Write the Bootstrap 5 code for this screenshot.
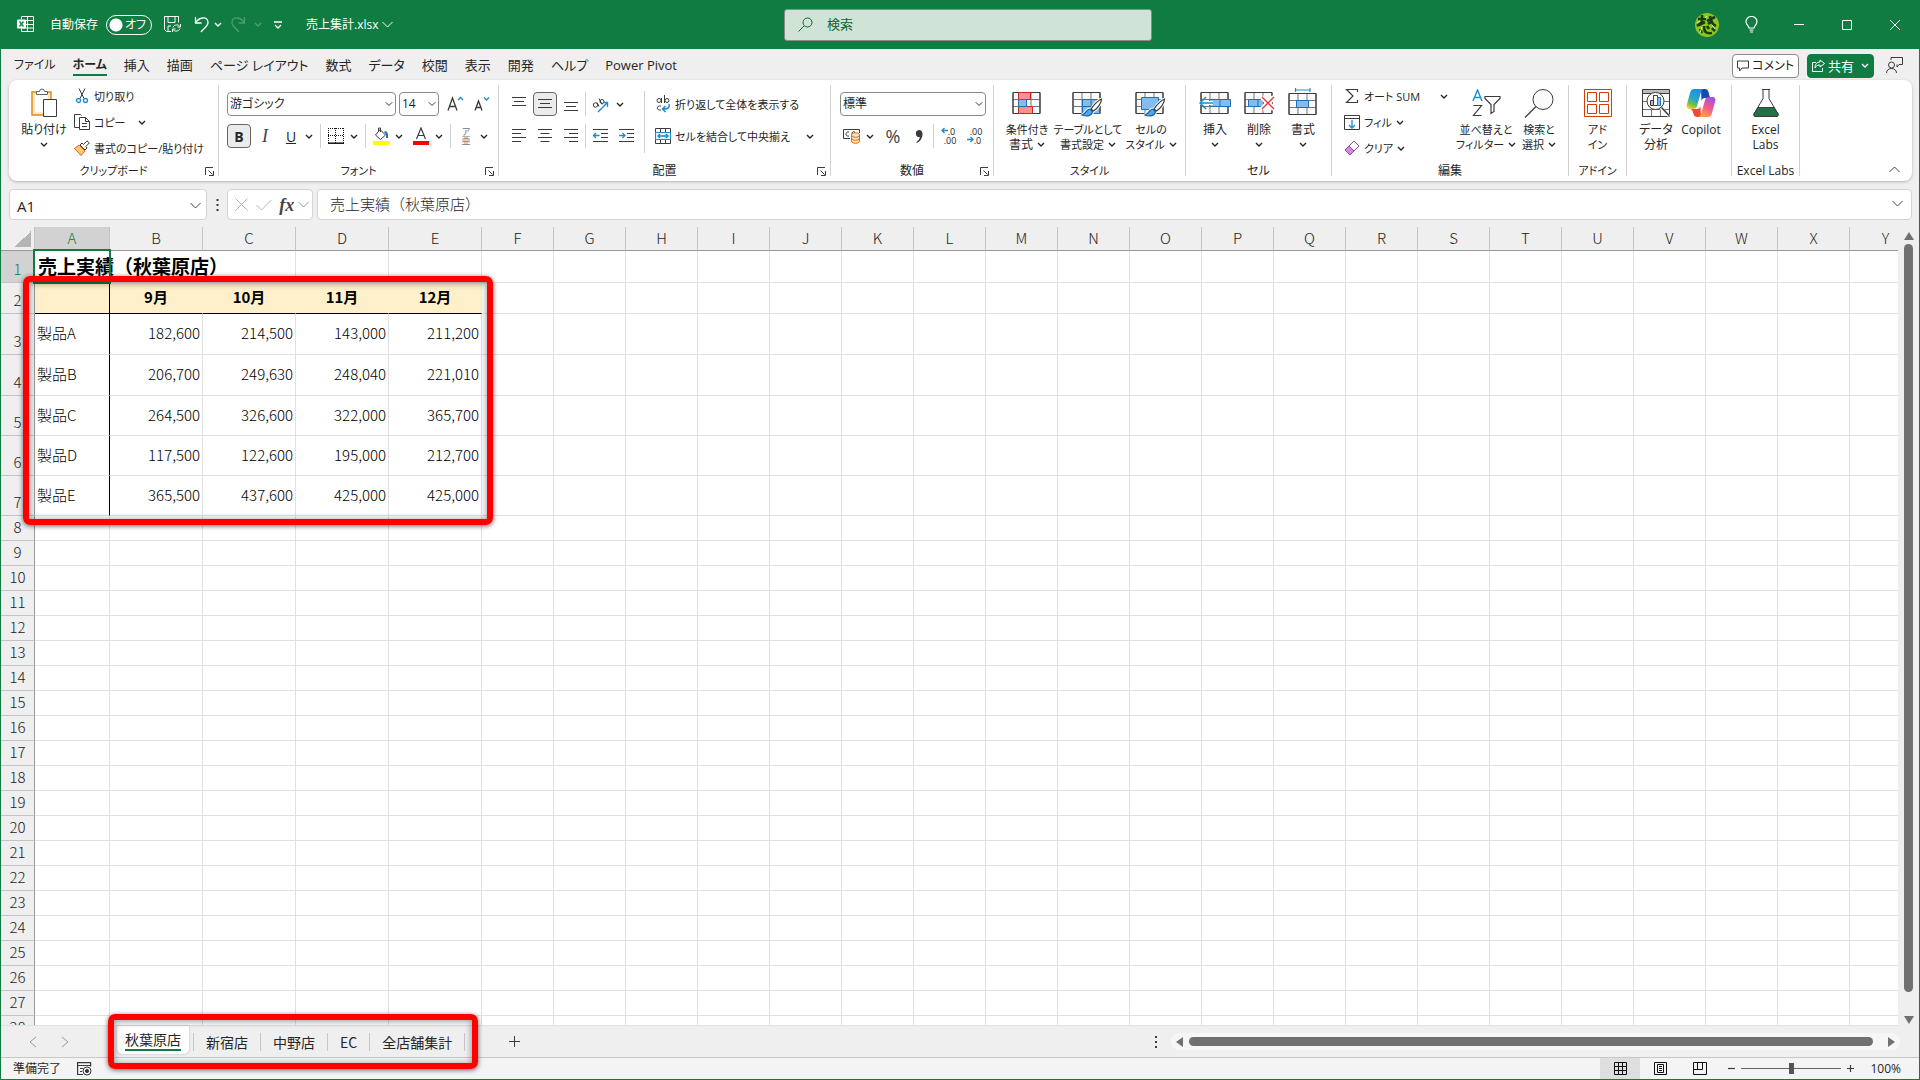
<!DOCTYPE html>
<html lang="ja">
<head>
<meta charset="utf-8">
<meta name="viewport" content="width=device-width, initial-scale=1">
<title>売上集計.xlsx</title>
<link rel="stylesheet" href="https://cdn.jsdelivr.net/npm/bootstrap@5.3.0/dist/css/bootstrap.min.css">
<style>
:root{--xl:#107c41;--ink:#262626;--line:#e1e1e1;--chrome:#efefef}
html,body{height:100%}
body{font:12px/15px "Open Sans","Noto Sans CJK JP",sans-serif;color:var(--ink);background:var(--chrome);overflow:hidden}
.jp{font-family:"Noto Sans CJK JP",sans-serif}
.shell{height:100vh;border:1px solid var(--xl);border-top:0;font-feature-settings:"palt"}
.shell>*{flex-shrink:0}
button,input,select{font:inherit;color:inherit;font-feature-settings:inherit}
.plain{border:0;background:none;padding:0;white-space:nowrap;display:inline-flex;align-items:center;justify-content:center}
.sm11{font-size:11px}
.sm12{font-size:12px}
svg{display:block;flex:none;fill:none;stroke:#3b3b3b;stroke-width:1}
.chev{width:8px;height:5px;stroke:currentColor;stroke-width:1.4}
.chev-lg{width:11px;height:7px;stroke:#444;stroke-width:1}
/* title bar */
.titlebar{height:49px;background:var(--xl);color:#fff;padding:0 0 0 16px}
.titlebar svg{stroke:#fff}
.side{flex:1 1 0}
.autosave{position:relative;width:46px;height:20px}
.autosave input{appearance:none;display:block;width:46px;height:20px;margin:0;border:1px solid #fff;border-radius:10px;background:radial-gradient(circle at 9px 9px,#fff 6px,transparent 7px)}
.autosave span{position:absolute;right:6px;top:2px}
.searchbox{width:368px;height:32px;background:#cfe3d7;border:1px solid #8b8b8b;border-radius:3px;padding:0 13px;gap:14px;color:#0d6434}
.searchbox svg{stroke:#0d6434}
.searchbox input{border:0;background:none;outline:0;width:100%;padding:0;font-size:13px}
.searchbox input::placeholder{color:#0d6434;opacity:1}
.avatar{width:24px;height:24px}
.win{width:48px;height:40px}
/* tab row */
.menurow{height:31px;font-size:13px;line-height:18px;padding:2px 8px 0 13px}
.menurow nav{gap:17px}
.menurow a{color:inherit;text-decoration:none;white-space:nowrap;padding:0 0 2px}
.menurow a.on{font-weight:700;border-bottom:2px solid var(--xl);padding-bottom:0}
.pill{height:24px;border:1px solid #8a8a8a;border-radius:4px;background:#fff;gap:3px}
.pill-share{background:var(--xl);border-color:var(--xl);color:#fff}
.pill-share svg{stroke:#fff}
/* ribbon */
.ribbon{margin:0 7px 0 8px;height:101px;background:#fff;border-radius:8px;box-shadow:0 1px 3px rgba(0,0,0,.25);padding-top:5px}
.rgroup{height:91px;border-right:1px solid #d1d1d1;flex:none}
.rbody{height:82px;margin-top:-2px}
.rfoot{display:grid;grid-template-columns:1fr auto 1fr;height:12px;line-height:12px;align-items:center;padding:0 4px;white-space:nowrap}
.rfoot button{justify-self:end}
.rfoot span{grid-column:2}
.w-clip{width:210px}.w-font{width:280px}.w-align{width:332px}.w-num{width:163px}.w-style{width:192px}
.w-cell{width:146px}.w-edit{width:237px}.w-add{width:58px}.w-data{width:105px}.w-labs{width:68px}
.rows3>*{height:26px;gap:4px}
.rows2{padding-top:5px}
.rows2>div{height:32px}
.tall{flex-direction:column;justify-content:flex-start;padding-top:5px;line-height:15px}
.tall .pic{height:30px;margin-bottom:4px;display:flex;align-items:center}
.tall .ln{height:15px;display:flex;align-items:center;justify-content:center;gap:4px}
.t44{width:44px}.t46{width:46px}.t58{width:58px}.t60{width:60px}.t62{width:62px}.t64{width:64px}
.tool{width:24px;height:24px;border-radius:4px}
.tool.on{border:1px solid #666;background:#ebebeb}
.drop{width:12px;height:24px}
.vsep{width:1px;height:24px;background:#d1d1d1;flex:none}
.spaced .vsep{margin:0 3px 0 5px}
.letter{font-size:14px}
.combo{height:24px;min-height:0;border:1px solid #8a8a8a;border-radius:4px;padding:0 14px 0 2px;font-size:12px;line-height:20px;background-color:#fff;background-position:right 2px center;background-size:8px 8px}
.glyph{font-size:18px;line-height:24px;color:#444}
/* formula bar */
.fbar{padding:8px 7px 7px 8px;height:46px;font-size:15px}
.fbox{height:31px;border:1px solid #d4d4d4;border-radius:4px;background:#fff}
.fbox input{border:0;outline:0;background:none;width:100%;padding:0}
.fbox-name{width:198px;padding:2px 5px 0 7px}
.fbox-fx{width:86px;padding:0 3px}
.fbox-text{padding:0 8px 2px 12px}
/* sheet */
.sheet{overflow:hidden;background:#fff;position:relative;min-height:0}
.shell>.sheet{flex-shrink:1}
.sheetpane{overflow:hidden;border-bottom:1px solid var(--line)}
.cells{border-collapse:separate;border-spacing:0;table-layout:fixed;width:1909px;font-size:15px;line-height:22px;color:#000;font-feature-settings:normal}
.cells th,.cells td{border-right:1px solid var(--line);border-bottom:1px solid var(--line);padding:0 2px 2px;white-space:nowrap;height:25px;font-weight:300}
.cells thead th{background:var(--chrome);height:24px;line-height:21px;text-align:center;border-right-color:#c4c4c4;border-bottom-color:#999;color:#222}
.cells tbody th{background:var(--chrome);text-align:center;vertical-align:bottom;border-right-color:#999;border-bottom-color:#c4c4c4;color:#222}
.cells .sel{background:#d2d2d2!important;color:var(--xl)!important}
.cells td{vertical-align:middle}
.cells .num{text-align:right}
.cells .hd{background:#fff0cc;font-weight:700;text-align:center;border-right-color:#fff0cc;border-bottom-color:#000}
.cells .lab{border-right-color:#000}
.cells .ttl{font-size:19px;font-weight:700;position:relative;padding-left:3px;overflow:visible}
.cells .ttl+td{border-right-color:transparent}
.ttl::after{content:"";position:absolute;inset:-2px -2px -2px -2px;border:2px solid var(--xl)}
.cells .corner{padding-bottom:0}
.corner::after{content:"";display:block;margin:0 1px 0 auto;width:16px;height:16px;background:linear-gradient(135deg,transparent 50%,#b4b4b4 50%)}
.callout{position:absolute;border:6px solid #f00;border-radius:7px;box-shadow:0 1px 5px rgba(0,0,0,.6),inset 0 1px 7px rgba(0,0,0,.45);pointer-events:none;z-index:3}
.callout-data{left:22px;top:49px;width:470px;height:249px}
.callout-tabs{left:-9px;top:-12px;right:-13px;bottom:-12px}
.vscroll{width:21px;background:var(--chrome);padding:5px 0 2px}
.thumb{background:#707070;border-radius:5px}
.vscroll .thumb{width:9px}
.vscroll svg,.hscroll svg{fill:#707070;stroke:none}
/* sheet tabs */
.tabrow{height:32px;border-bottom:1px solid #c8c8c8;font-size:14px;line-height:18px}
.sheettabs{position:relative;height:31px}
.sheettabs button{height:31px;padding:0 12px}
.sheettabs .rule{width:1px;height:18px;background:#c6c6c6;align-self:center}
.sheettabs .on{background:#fff;border-radius:0 0 5px 5px;height:28px;padding:0 8px 1px;margin:0 4px 3px 0;box-shadow:0 0 2px rgba(0,0,0,.3)}
.sheettabs .on span{border-bottom:2px solid var(--xl);line-height:20px}
.hscroll{width:729px;height:17px;background:#f6f6f6;border-radius:8px;padding:0 5px;gap:6px}
.hscroll .thumb{height:9px;margin-right:9px}
/* status bar */
.statusbar{height:21px;background:#f4f4f4;padding:0 18px 0 12px}
.view{width:40px;height:21px}
.view.on{background:#dedede}
.zoomer{appearance:none;width:100px;height:12px;background:linear-gradient(#666,#666) center/100% 1px no-repeat;margin:0 6px}
.zoomer::-webkit-slider-thumb{appearance:none;width:5px;height:11px;background:#555}
</style>
<script src="https://cdn.jsdelivr.net/npm/bootstrap@5.3.0/dist/js/bootstrap.bundle.min.js"></script>
</head>
<body>
<svg width="0" height="0" class="position-absolute">
  <symbol id="cv" viewBox="0 0 8 5"><path d="M1 1l3 3 3-3"/></symbol>
  <symbol id="cvl" viewBox="0 0 11 7"><path d="M.5 1l5 5 5-5"/></symbol>
  <symbol id="launch" viewBox="0 0 9 9"><path d="M.5 8V.5H8M3.500 3.500l4 4M8.500 4v4.500H4"/></symbol>
  <symbol id="gridpic" viewBox="0 0 30 24"><path fill="#fafafa" d="M1 1.500h27v21H1z"/><path stroke="#777" d="M1 8.500h27M1 15.500h27M10 2v20M19 2v20"/><path d="M1 1.500h27v21H1z"/></symbol>
  <symbol id="brush" viewBox="0 0 22 20"><path fill="#fff" stroke="#fff" stroke-width="3" d="M20.500 1c-3 1-8 6-10 10l2 2c4-2.500 8-8 8-12zM9 11c-4 0-3 4-8 6 5 2 10 1 10.500-3.500z"/><path fill="#fff" stroke="#3b3b3b" stroke-width="1.200" d="M20.500 1c-3 1-8 6-10.500 10l2.500 2c4-2.500 8-8 8-12z"/><path fill="#5aa5e0" stroke="#0f5fa8" stroke-width="1.200" d="M9 11c-4 0-3 4-8 6 5 2 10 1 10.500-3.500z"/></symbol>
</svg>
<div class="shell d-flex flex-column">
  <header class="titlebar d-flex align-items-center">
    <div class="side d-flex align-items-center">
      <svg width="17" height="17" viewBox="0 0 17 17"><path d="M4.500 3.500V.5h12v15h-12v-3M10.500.5v15M4.500 4.500h12M9 8.500h7.500M4.500 12h12"/><path fill="#fff" d="M.5 4h8v8h-8z"/><path stroke="#107c41" stroke-width="1.300" d="M2.500 5.500l4 5M6.500 5.500l-4 5"/></svg>
      <label for="autosave" class="ms-3">自動保存</label>
      <div class="autosave ms-2"><input id="autosave" type="checkbox"><span>オフ</span></div>
      <button class="plain ms-2 p-1" aria-label="保存"><svg width="18" height="17" viewBox="0 0 18 17"><path d="M7 15.500H2.500l-2-2V.5h14v6M4 .5v6h7v-6M4 15v-5h3M16.500 8v3h-3M8.500 16v-3h3M9 11.500c1-3 5.500-3.500 7-1M16 12.500c-1 3-5.500 3.500-7 1"/></svg></button>
      <button class="plain ms-1 p-1" aria-label="元に戻す"><svg width="16" height="17" viewBox="0 0 16 17"><path stroke-width="1.300" d="M1.500 1v6h6M1.500 7C5 1 13 0 14 6c.5 4-4 6-7 10"/></svg></button>
      <button class="plain" aria-label="履歴"><svg class="chev"><use href="#cv"/></svg></button>
      <button class="plain ms-1 p-1 opacity-25" aria-label="やり直し"><svg width="16" height="17" viewBox="0 0 16 17"><path stroke-width="1.300" d="M14.500 1v6h-6M14.500 7C11 1 3 0 2 6c-.5 4 4 6 7 10"/></svg></button>
      <button class="plain ps-1 opacity-25" aria-label="やり直し履歴"><svg class="chev"><use href="#cv"/></svg></button>
      <button class="plain ms-2 p-1" aria-label="クイック アクセス"><svg width="8" height="8" viewBox="0 0 8 8"><path stroke-width="1.300" d="M0 1h8M1 4l3 3 3-3"/></svg></button>
      <button class="plain ms-3 ps-1 gap-1">売上集計.xlsx<svg class="chev-lg" style="stroke:#fff"><use href="#cvl"/></svg></button>
    </div>
    <label class="searchbox d-flex align-items-center"><svg width="15" height="15" viewBox="0 0 15 15"><circle cx="9.500" cy="5.500" r="4.500"/><path d="M6 9l-5.500 5.500"/></svg><input type="text" placeholder="検索" aria-label="検索"></label>
    <div class="side d-flex align-items-center justify-content-end">
      <svg class="avatar me-2" viewBox="0 0 24 24"><circle cx="12" cy="12" r="12" fill="#8fc31f" stroke="none"/><path stroke="#173d12" stroke-width="2.600" d="M3 6h8M7 2v7l-5 4M12 8l8-4M15 3c1 6 3 9 6 10M4 12l6-3M5 16l2 4M9 13c0 6 2 8 8 7M12 13l2 3M17 15l3 3M13 11l3-2"/><path stroke="#e3f2a0" stroke-width="1" d="M2 10l3-2M10 5l2-2M17 12l3 4M7 14l-2 6"/></svg>
      <button class="plain win" aria-label="ヒント"><svg width="13" height="17" viewBox="0 0 13 17"><path stroke-width="1.200" d="M4 12c0-2-3-3-3-6.500a5.500 5 0 0 1 11 0C12 9 9 10 9 12zM4.500 14h4M5 16h3"/></svg></button>
      <button class="plain win" aria-label="最小化"><svg width="10" height="10"><path d="M0 4.500h10"/></svg></button>
      <button class="plain win" aria-label="最大化"><svg width="10" height="10"><path d="M.5.5h9v9h-9z"/></svg></button>
      <button class="plain win" aria-label="閉じる"><svg width="10" height="10"><path d="M0 0l10 10M10 0L0 10"/></svg></button>
    </div>
  </header>

  <div class="menurow d-flex align-items-center justify-content-between">
    <nav class="d-flex align-items-center" aria-label="リボン タブ">
      <a href="#" class="sm12">ファイル</a><a href="#" class="on sm12">ホーム</a><a href="#">挿入</a><a href="#">描画</a><a href="#">ページ レイアウト</a><a href="#">数式</a><a href="#">データ</a><a href="#">校閲</a><a href="#">表示</a><a href="#">開発</a><a href="#">ヘルプ</a><a href="#">Power Pivot</a>
    </nav>
    <div class="d-flex align-items-center gap-2">
      <button class="plain pill px-1 sm12"><svg width="12" height="12" viewBox="0 0 12 12"><path d="M.5 1h11v7H5l-2.500 3V8h-2z"/></svg>コメント</button>
      <button class="plain pill pill-share px-1"><svg width="13" height="13" viewBox="0 0 13 13"><path d="M4 3.500H.5v9h10V9M8 1l4.500 3.500L8 8V6C5 6 4 7 3 9c0-4 2-6 5-6z"/></svg>共有<svg class="chev ms-1"><use href="#cv"/></svg></button>
      <button class="plain ps-1 pe-2" aria-label="共同編集"><svg width="17" height="17" viewBox="0 0 17 17"><circle cx="5.500" cy="8" r="3"/><path d="M.5 16c0-6 10-6 10 0M5 3V.5h11.500v7H13l-2 2.500V7.500"/></svg></button>
    </div>
  </div>

  <section class="ribbon d-flex">
    <div class="rgroup w-clip">
      <div class="rbody d-flex" style="padding-left:12px">
        <button class="plain tall t46"><span class="pic"><svg width="29" height="30" viewBox="0 0 29 30"><path fill="#fbe9c4" stroke="#e08a1e" stroke-width="1.500" d="M2 4h19v23H2z"/><path fill="#fff" stroke="none" d="M5 7h13v17H5z"/><path fill="#fff" stroke="#666" d="M6.500 6.500v-3h3a2.500 2.500 0 0 1 5 0h3v3z"/><path fill="#fff" d="M13.500 11.500h13v17h-13z"/></svg></span><span class="ln">貼り付け</span><span class="ln"><svg class="chev"><use href="#cv"/></svg></span></button>
        <div class="rows3 sm11 d-flex flex-column align-items-start" style="padding-left:7px">
          <button class="plain"><svg width="16" height="16" viewBox="0 0 16 16"><path d="M5 .5l5 10M11 .5l-5 10"/><circle cx="4.500" cy="12.500" r="2" stroke="#1e8bcd" stroke-width="1.300"/><circle cx="11.500" cy="12.500" r="2" stroke="#1e8bcd" stroke-width="1.300"/></svg>切り取り</button>
          <button class="plain"><svg width="16" height="16" viewBox="0 0 16 16"><path d="M5 13.500H.5V.5h6l1 1M5.500 3.500h6l4 4v8h-10zM8 9.500h5M8 12.500h5M11.500 3.500v4h4"/></svg>コピー<svg class="chev ms-2"><use href="#cv"/></svg></button>
          <button class="plain"><svg width="16" height="16" viewBox="0 0 16 16"><path fill="#f9c784" stroke="#dc6b0a" d="M5 5l6 6-4 4.500C5 13 3 11 .5 8.500z"/><path fill="#fff" d="M6 5l2-2 1.500 1.500L13 .8 15.300 3l-3.500 3.500L13 8l-2 2z"/></svg>書式のコピー/貼り付け</button>
        </div>
      </div>
      <div class="rfoot sm11"><span>クリップボード</span><button class="plain" aria-label="クリップボード設定"><svg width="9" height="9"><use href="#launch"/></svg></button></div>
    </div>

    <div class="rgroup w-font">
      <div class="rbody rows2" style="padding-left:8px">
        <div class="d-flex align-items-center">
          <select class="form-select combo" style="width:169px" aria-label="フォント"><option>游ゴシック</option></select>
          <select class="form-select combo" style="width:40px;margin-left:3px" aria-label="サイズ"><option>14</option></select>
          <button class="plain tool ms-1" aria-label="拡大"><svg width="17" height="16" viewBox="0 0 17 16"><path stroke-width="1.300" d="M1 14.500L5.500 2 10 14.500M2.500 10.500h6"/><path stroke="#1e8bcd" stroke-width="1.400" d="M11 4l2.500-2.500L16 4"/></svg></button>
          <button class="plain tool" style="margin-left:2px" aria-label="縮小"><svg width="17" height="16" viewBox="0 0 17 16"><path stroke-width="1.300" d="M2 14.500L5.500 5 9 14.500M3 11.500h5"/><path stroke="#1e8bcd" stroke-width="1.400" d="M11 1.500L13.500 4 16 1.500"/></svg></button>
        </div>
        <div class="d-flex align-items-center spaced">
          <button class="plain tool on fw-bold letter">B</button>
          <button class="plain tool" aria-label="斜体" style="margin:0 2px"><i class="glyph" style="font-family:'Liberation Serif',serif">I</i></button>
          <button class="plain tool letter text-decoration-underline">U</button><button class="plain drop" aria-label="下線"><svg class="chev"><use href="#cv"/></svg></button>
          <i class="vsep"></i>
          <button class="plain tool" aria-label="罫線"><svg width="16" height="16" viewBox="0 0 16 16"><path stroke="#111" stroke-dasharray="1 1" d="M0 .5h16M.5 0v15M15.500 0v15M7.500 0v15M0 7.500h16"/><path stroke="#111" stroke-width="1.500" d="M0 15.200h16"/></svg></button><button class="plain drop" aria-label="罫線の種類"><svg class="chev"><use href="#cv"/></svg></button>
          <i class="vsep"></i>
          <button class="plain tool" aria-label="塗りつぶし"><svg width="16" height="18" viewBox="0 0 16 18"><path fill="#fff" d="M7 2.500l5.500 5.500-5 4.500L2.500 8zM5.500 4.500V1h2v4"/><path stroke="#1e6fb8" stroke-width="2" d="M11.500 5c2 0 3 2 2.500 6"/><path fill="#ff0" stroke="none" d="M0 14h16v4H0z"/></svg></button><button class="plain drop" aria-label="色"><svg class="chev"><use href="#cv"/></svg></button>
          <button class="plain tool ms-1" aria-label="フォントの色"><svg width="16" height="18" viewBox="0 0 16 18"><path stroke-width="1.200" d="M3.500 12L8 1l4.500 11M5 8.500h6"/><path fill="#f00" stroke="none" d="M0 14h16v4H0z"/></svg></button><button class="plain drop" aria-label="文字色"><svg class="chev"><use href="#cv"/></svg></button>
          <i class="vsep"></i>
          <button class="plain tool flex-column text-secondary" style="font-size:9px;line-height:9px"><span>ア</span><span>亜</span></button><button class="plain drop" aria-label="ふりがな"><svg class="chev"><use href="#cv"/></svg></button>
        </div>
      </div>
      <div class="rfoot sm11"><span>フォント</span><button class="plain" aria-label="フォント設定"><svg width="9" height="9"><use href="#launch"/></svg></button></div>
    </div>

    <div class="rgroup w-align">
      <div class="rbody d-flex" style="padding-left:8px">
        <div class="rows2" style="width:137px">
          <div class="d-flex align-items-center" style="gap:2px">
            <button class="plain tool" aria-label="上揃え"><svg width="14" height="16"><path d="M0 1.500h14M2 5.500h10M0 9.500h14"/></svg></button>
            <button class="plain tool on" aria-label="上下中央"><svg width="14" height="16"><path d="M0 3.500h14M2 7.500h10M0 11.500h14"/></svg></button>
            <button class="plain tool" aria-label="下揃え"><svg width="14" height="16"><path d="M0 6.500h14M2 10.500h10M0 14.500h14"/></svg></button>
            <i class="vsep"></i>
            <button class="plain tool" aria-label="方向"><svg width="17" height="17" viewBox="0 0 17 17"><circle cx="3.500" cy="9" r="2.200"/><path d="M5 6.500l2 4M7 2.500l3 6"/><circle cx="10" cy="5.500" r="2"/><path stroke="#1e8bcd" stroke-width="1.400" d="M6 16l9-9M11 6.500h4.500V11"/></svg></button><button class="plain drop" aria-label="方向の選択"><svg class="chev"><use href="#cv"/></svg></button>
          </div>
          <div class="d-flex align-items-center" style="gap:2px">
            <button class="plain tool" aria-label="左揃え"><svg width="14" height="14"><path d="M0 .5h14M0 4.500h9M0 8.500h14M0 12.500h9"/></svg></button>
            <button class="plain tool" aria-label="中央揃え"><svg width="14" height="14"><path d="M0 .5h14M2.500 4.500h9M0 8.500h14M2.500 12.500h9"/></svg></button>
            <button class="plain tool" aria-label="右揃え"><svg width="14" height="14"><path d="M0 .5h14M5 4.500h9M0 8.500h14M5 12.500h9"/></svg></button>
            <i class="vsep"></i>
            <button class="plain tool" aria-label="インデント減"><svg width="15" height="14"><path d="M0 .5h15M8 4.500h7M8 8.500h7M0 12.500h15"/><path stroke="#1e8bcd" stroke-width="1.300" d="M6.500 6.500h-6M3 4L.5 6.500 3 9"/></svg></button>
            <button class="plain tool" aria-label="インデント増"><svg width="15" height="14"><path d="M0 .5h15M8 4.500h7M8 8.500h7M0 12.500h15"/><path stroke="#1e8bcd" stroke-width="1.300" d="M0 6.500h6M3.500 4L6 6.500 3.500 9"/></svg></button>
          </div>
        </div>
        <i class="vsep mt-2" style="height:62px"></i>
        <div class="rows2 flex-grow-1" style="padding-left:10px">
          <div class="d-flex align-items-center"><button class="plain gap-1"><svg width="16" height="18" viewBox="0 0 16 18"><circle cx="4" cy="5.500" r="2"/><path d="M6.500 3v5M9.500 0v8M6 11c-5-1-5 5 0 4"/><circle cx="12" cy="5.500" r="2"/><path stroke="#1e8bcd" stroke-width="1.500" d="M14 9c1 3 0 5-6.500 5M10.500 11l-3 3 3 3"/></svg><span class="sm11">折り返して全体を表示する</span></button></div>
          <div class="d-flex align-items-center justify-content-between pe-3"><button class="plain gap-1"><svg width="16" height="16" viewBox="0 0 16 16"><path fill="#fff" d="M.5.500h15v15H.5zM5.500.5v15M10.500.5v15"/><path fill="#e6f3fc" stroke="#1e8bcd" d="M.5 4.500h15v7H.5z"/><path stroke="#1e8bcd" stroke-width="1.300" d="M3 8h10M5 6L3 8l2 2M11 6l2 2-2 2"/></svg><span class="sm11">セルを結合して中央揃え</span></button><svg class="chev"><use href="#cv"/></svg></div>
        </div>
      </div>
      <div class="rfoot"><span>配置</span><button class="plain" aria-label="配置の設定"><svg width="9" height="9"><use href="#launch"/></svg></button></div>
    </div>

    <div class="rgroup w-num">
      <div class="rbody rows2" style="padding-left:9px">
        <div class="d-flex align-items-center"><select class="form-select combo" style="width:146px" aria-label="表示形式"><option>標準</option></select></div>
        <div class="d-flex align-items-center">
          <button class="plain tool" aria-label="通貨"><svg width="18" height="16" viewBox="0 0 18 16"><path d="M7 10.500H.5v-9h16V5M6 4c-4-1-4 5 0 4M9 6c0-3 3-3 3-1"/><path fill="#fde3c4" stroke="#dc6b0a" d="M8.500 7v6c0 3 8 3 8 0V7c0-3-8-3-8 0c0 3 8 3 8 0M8.500 10c0 3 8 3 8 0"/></svg></button><button class="plain drop" aria-label="通貨の種類"><svg class="chev"><use href="#cv"/></svg></button>
          <div class="d-flex align-items-center" style="gap:2px;padding-left:5px">
          <button class="plain tool glyph">%</button>
          <button class="plain tool" aria-label="桁区切り"><svg width="8" height="13" viewBox="0 0 8 13"><path fill="#3b3b3b" stroke="none" d="M4 0a3.500 3.500 0 1 0 .8 7C4.500 9 3.500 10.500 1.500 12v1C5 12 7.500 8 7.500 4 7.500 1.500 6 0 4 0z"/></svg></button>
          <i class="vsep"></i>
          <button class="plain tool flex-column" style="font-size:9px;line-height:9px" aria-label="小数点以下を増やす"><span class="d-flex"><svg width="7" height="7"><path stroke="#1e8bcd" stroke-width="1.300" d="M7 3.500H1M3.500 1L1 3.500 3.500 6"/></svg>.0</span><span class="ps-1">.00</span></button>
          <button class="plain tool flex-column" style="font-size:9px;line-height:9px" aria-label="小数点以下を減らす"><span class="ps-1">.00</span><span class="d-flex"><svg width="7" height="7"><path stroke="#1e8bcd" stroke-width="1.300" d="M0 3.500h6M3.500 1L6 3.500 3.500 6"/></svg>.0</span></button>
          </div>
        </div>
      </div>
      <div class="rfoot"><span>数値</span><button class="plain" aria-label="数値の設定"><svg width="9" height="9"><use href="#launch"/></svg></button></div>
    </div>

    <div class="rgroup w-style">
      <div class="rbody d-flex" style="padding-left:4px">
        <button class="plain tall t58"><span class="pic"><svg width="30" height="24" viewBox="0 0 30 24"><use href="#gridpic" width="30" height="24"/><path fill="#ff8f92" stroke="#c42b1c" d="M6.500 1.500h12v7h-12zM6.500 15.500h14v7h-14z"/><path fill="#83bdeb" stroke="#1e6fb8" d="M6.500 8.500h8v7h-8z"/></svg></span><span class="ln sm11">条件付き</span><span class="ln">書式<svg class="chev"><use href="#cv"/></svg></span></button>
        <button class="plain tall t64"><span class="pic"><svg width="32" height="30" viewBox="0 0 32 30"><use href="#gridpic" y="3" width="30" height="24"/><path fill="#83bdeb" stroke="#1e6fb8" d="M10.500 11.500h17v14h-17zM19 11v15M10 18.500h17"/><use href="#brush" x="9" y="10" width="22" height="20"/></svg></span><span class="ln sm11">テーブルとして</span><span class="ln sm11">書式設定<svg class="chev"><use href="#cv"/></svg></span></button>
        <button class="plain tall t62"><span class="pic"><svg width="32" height="30" viewBox="0 0 32 30"><use href="#gridpic" y="3" width="30" height="24"/><path fill="#83bdeb" stroke="#1e6fb8" d="M6.500 9.500h17v12h-17z"/><use href="#brush" x="9" y="10" width="22" height="20"/></svg></span><span class="ln sm11">セルの</span><span class="ln sm11">スタイル<svg class="chev"><use href="#cv"/></svg></span></button>
      </div>
      <div class="rfoot sm11"><span>スタイル</span></div>
    </div>

    <div class="rgroup w-cell">
      <div class="rbody d-flex" style="padding-left:7px">
        <button class="plain tall t44"><span class="pic"><svg width="32" height="24" viewBox="0 0 32 24"><use href="#gridpic" x="1" width="30" height="24"/><path fill="#83bdeb" stroke="#1e6fb8" d="M10.500 8.500h21v7h-21zM21 8v8"/><path stroke="#fff" stroke-width="4" d="M1 12h13"/><path stroke="#1e8bcd" stroke-width="1.500" d="M1 12h13M7 6l-6 6 6 6"/></svg></span><span class="ln">挿入</span><span class="ln"><svg class="chev"><use href="#cv"/></svg></span></button>
        <button class="plain tall t44"><span class="pic"><svg width="31" height="24" viewBox="0 0 31 24"><use href="#gridpic" width="30" height="24"/><path fill="#83bdeb" stroke="#1e6fb8" d="M4.500 8.500h15v7h-15zM14 8v8"/><path stroke="#fff" stroke-width="5" d="M18 6l12 12M30 6L18 18"/><path stroke="#e8383d" stroke-width="1.400" d="M18 6l12 12M30 6L18 18"/></svg></span><span class="ln">削除</span><span class="ln"><svg class="chev"><use href="#cv"/></svg></span></button>
        <button class="plain tall t44"><span class="pic"><svg width="30" height="30" viewBox="0 0 30 30"><use href="#gridpic" y="4" width="30" height="24"/><path fill="#83bdeb" stroke="#1e6fb8" d="M8.500 12.500h12v7h-12z"/><path stroke="#1e8bcd" stroke-width="1.200" d="M7 2h15M7.500 0v4M22 0v4"/></svg></span><span class="ln">書式</span><span class="ln"><svg class="chev"><use href="#cv"/></svg></span></button>
      </div>
      <div class="rfoot"><span>セル</span></div>
    </div>

    <div class="rgroup w-edit">
      <div class="rbody d-flex" style="padding-left:12px">
        <div class="rows3 sm11 d-flex flex-column align-items-start" style="width:112px">
          <button class="plain"><svg width="16" height="16" viewBox="0 0 16 16"><path stroke-width="1.200" d="M13.500 4V1.500h-11L9 8l-6.500 6.500h11V12"/></svg>オート SUM<svg class="chev ms-3"><use href="#cv"/></svg></button>
          <button class="plain"><svg width="16" height="15" viewBox="0 0 16 15"><path d="M.5.500h15v14H.5zM.5 3.500h15"/><path stroke="#1e8bcd" stroke-width="1.300" d="M8 5v8M5 10l3 3 3-3"/></svg>フィル<svg class="chev"><use href="#cv"/></svg></button>
          <button class="plain"><svg width="16" height="16" viewBox="0 0 16 16"><path fill="#fff" stroke="#9a3fa8" d="M10 1l5 5-9 9-5-5z"/><path fill="#cf8fd8" stroke="#9a3fa8" d="M5 6l5 5-4 4-5-5z"/></svg>クリア<svg class="chev"><use href="#cv"/></svg></button>
        </div>
        <button class="plain tall t60"><span class="pic"><svg width="29" height="28" viewBox="0 0 29 28"><path stroke="#1e8bcd" stroke-width="1.400" d="M1 12L5.500 1 10 12M2.500 8.500h6"/><path stroke-width="1.200" d="M1.500 16.500h8l-8 10h8M13 7.500h15v2l-6 6v7l-3 2v-9l-6-6z"/></svg></span><span class="ln sm11">並べ替えと</span><span class="ln sm11">フィルター<svg class="chev"><use href="#cv"/></svg></span></button>
        <button class="plain tall t46"><span class="pic"><svg width="30" height="29" viewBox="0 0 30 29"><circle fill="#fafafa" cx="19" cy="10.500" r="10"/><path stroke-width="1.300" d="M12 17.500l-11 11"/></svg></span><span class="ln sm11">検索と</span><span class="ln sm11">選択<svg class="chev"><use href="#cv"/></svg></span></button>
      </div>
      <div class="rfoot"><span>編集</span></div>
    </div>

    <div class="rgroup w-add">
      <div class="rbody d-flex justify-content-center">
        <button class="plain tall t46"><span class="pic"><svg width="28" height="28" viewBox="0 0 28 28"><path stroke="#d83b01" d="M.5.500h27v27H.5zM3.500 3.500h9v9h-9zM15.500 3.500h9v9h-9zM3.500 15.500h9v9h-9zM15.500 15.500h9v9h-9z"/></svg></span><span class="ln sm11">アド</span><span class="ln sm11">イン</span></button>
      </div>
      <div class="rfoot sm11"><span>アドイン</span></div>
    </div>

    <div class="rgroup w-data">
      <div class="rbody d-flex" style="padding-left:6px">
        <button class="plain tall t46"><span class="pic"><svg width="28" height="28" viewBox="0 0 28 28"><path fill="#fafafa" d="M.5.500h27v27H.5z"/><path fill="#bbb" d="M.5.500h27v4H.5z"/><path stroke="#777" d="M1 12.500h26M1 20.500h26M9.500 20v7M18.500 20v7"/><path stroke="#fff" stroke-width="3" d="M19 19l8 8"/><circle fill="#fff" cx="13.500" cy="12" r="8.500"/><path stroke-width="1.500" d="M19.500 18.500l7.500 8"/><path fill="#bbb" d="M8.500 11.500h3v5h-3z"/><path fill="#fff" d="M11.500 6.500h4v10h-4z"/><path fill="#83bdeb" stroke="#1e6fb8" d="M15.500 8.500h3v8h-3z"/></svg></span><span class="ln">データ</span><span class="ln">分析</span></button>
        <button class="plain tall t44"><span class="pic"><svg width="30" height="28" viewBox="0 0 30 28" style="stroke:none">
          <defs><linearGradient id="ca" x1=".6" y1="0" x2=".2" y2="1"><stop offset="0" stop-color="#1a8fe8"/><stop offset=".5" stop-color="#2aa7c9"/><stop offset=".75" stop-color="#6cc04a"/><stop offset="1" stop-color="#ffd21f"/></linearGradient>
          <linearGradient id="cb" x1=".8" y1="0" x2=".3" y2="1"><stop offset="0" stop-color="#9b4ff0"/><stop offset=".5" stop-color="#f2598a"/><stop offset="1" stop-color="#ffa24a"/></linearGradient></defs>
          <path fill="#1748b8" d="M15 0h4c2 0 3 1 3.500 3l1 4c.4 1 1 2 2.500 2h-7c-2 0-3 1-3.500 3z"/>
          <path fill="url(#ca)" d="M8 0h10c-1.500 0-2.500 1-3 3l-4 14c-.5 2-2 3-4 3H4c-3 0-4-2-3-5L4 4c.8-2.500 2-4 4-4z"/>
          <path fill="#ee4b3c" d="M15 28h-4c-2 0-3-1-3.500-3l-1-3c-.4-1-1-2-2.500-2h7c2 0 3-1 3.500-3z"/>
          <path fill="url(#cb)" d="M22 28H12c1.500 0 2.500-1 3-3l4-14c.5-2 2-3 4-3h3c3 0 4 2 3 5l-3 11c-.8 2.500-2 4-4 4z"/></svg></span><span class="ln">Copilot</span></button>
      </div>
    </div>

    <div class="rgroup w-labs">
      <div class="rbody d-flex justify-content-center">
        <button class="plain tall t46"><span class="pic"><svg width="26" height="28" viewBox="0 0 26 28"><path fill="#fff" d="M9 .5h8M10 .5v9L1 25c-.5 1.500 0 2.500 2 2.500h20c2 0 2.500-1 2-2.500L16 9.500v-9"/><path fill="#217346" d="M5 18.500h16l4 6.500c.5 1.500 0 2.500-2 2.500H3c-2 0-2.500-1-2-2.500z"/></svg></span><span class="ln">Excel</span><span class="ln">Labs</span></button>
      </div>
      <div class="rfoot px-0"><span>Excel Labs</span></div>
    </div>
    <button class="plain ms-auto me-2 px-1 align-self-end pb-2" aria-label="リボンを閉じる"><svg class="chev-lg" viewBox="0 0 11 7"><path d="M.5 6l5-5 5 5"/></svg></button>
  </section>

  <div class="fbar d-flex">
    <div class="fbox fbox-name d-flex align-items-center"><input type="text" value="A1" aria-label="名前ボックス"><svg class="chev-lg"><use href="#cvl"/></svg></div>
    <svg width="20" height="31"><path stroke-width="2" stroke-dasharray="2 3" d="M10.500 10v12"/></svg>
    <div class="fbox fbox-fx d-flex align-items-center justify-content-between">
      <button class="plain ps-1" aria-label="キャンセル"><svg width="13" height="13" style="stroke:#b5b5b5"><path d="M.5.5l12 12M12.500.5l-12 12"/></svg></button>
      <button class="plain ps-1" aria-label="入力"><svg width="16" height="12" style="stroke:#b5b5b5"><path d="M.5 6l5 5 10-10"/></svg></button>
      <button class="plain fst-italic fw-bold glyph ps-1" style="font-family:'Liberation Serif',serif">fx</button>
      <svg class="chev-lg" style="stroke:#999"><use href="#cvl"/></svg>
    </div>
    <div class="fbox fbox-text flex-grow-1 d-flex align-items-center ms-1"><input type="text" class="jp" style="font-feature-settings:normal;font-weight:300" value="売上実績（秋葉原店）" aria-label="数式バー"><svg class="chev-lg"><use href="#cvl"/></svg></div>
  </div>

  <main class="sheet flex-grow-1 d-flex">
    <div class="sheetpane flex-grow-1" style="min-width:0">
      <table class="cells jp"><colgroup id="cols"></colgroup><thead><tr id="heads"></tr></thead><tbody id="grid"></tbody></table>
    </div>
    <div class="vscroll d-flex flex-column align-items-center gap-1">
      <svg width="10" height="8"><path d="M5 0l5 8H0z"/></svg><div class="thumb flex-grow-1 mb-3"></div><svg width="10" height="8" class="mt-1"><path d="M5 8l5-8H0z"/></svg>
    </div>
    <div class="callout callout-data"></div>
  </main>

  <div class="tabrow d-flex align-items-center">
    <button class="plain" style="padding-left:27px" aria-label="前のシート"><svg width="10" height="12" style="stroke:#999"><path d="M8 1L2 6l6 5"/></svg></button>
    <button class="plain" style="padding:0 47px 0 22px" aria-label="次のシート"><svg width="10" height="12" style="stroke:#999"><path d="M2 1l6 5-6 5"/></svg></button>
    <div class="sheettabs d-flex jp align-items-center">
      <button class="plain on"><span>秋葉原店</span></button><i class="rule"></i>
      <button class="plain">新宿店</button><i class="rule"></i>
      <button class="plain">中野店</button><i class="rule"></i>
      <button class="plain">EC</button><i class="rule"></i>
      <button class="plain">全店舗集計</button><i class="rule"></i>
      <div class="callout callout-tabs"></div>
    </div>
    <button class="plain" style="padding-left:44px" aria-label="新しいシート"><svg width="11" height="11"><path d="M5.500 0v11M0 5.500h11"/></svg></button>
    <svg class="ms-auto me-2" width="12" height="17"><path stroke-width="2" stroke-dasharray="2 3" d="M5 3v12"/></svg>
    <div class="hscroll d-flex align-items-center" style="margin-right:19px"><svg width="7" height="10"><path d="M7 0v10L0 5z"/></svg><div class="thumb flex-grow-1"></div><svg width="7" height="10"><path d="M0 0v10l7-5z"/></svg></div>
  </div>

  <footer class="statusbar d-flex align-items-center">
    <span>準備完了</span>
    <svg class="ms-3 me-auto" width="15" height="14" viewBox="0 0 15 14"><path stroke-width="1.200" d="M6 12.500H.6V.6h13v4M.5 3.500h13M3 6.500h3M3 9.500h2"/><circle cx="10" cy="9" r="4"/><circle cx="10" cy="9" r="1.600" fill="#3b3b3b"/></svg>
    <button class="plain view on" aria-label="標準"><svg width="13" height="13"><path stroke="#111" d="M.5.500h12v12H.5zM.5 4.500h12M.5 8.500h12M4.500.500v12M8.500.500v12"/></svg></button>
    <button class="plain view" aria-label="ページ レイアウト"><svg width="13" height="13"><path stroke="#111" d="M.5.500h12v12H.5zM3.500 2.500h6v8h-6zM5 4.500h3M5 6.500h3M5 8.500h3"/></svg></button>
    <button class="plain view" aria-label="改ページ"><svg width="14" height="13"><path stroke="#111" d="M.5.500h13v12H.5zM4.500.500v7M9.500.500v7H.5"/></svg></button>
    <button class="plain ps-2" aria-label="縮小"><svg width="7" height="7"><path stroke-width="1.200" d="M0 3.500h7"/></svg></button>
    <input class="zoomer" type="range" min="0" max="100" value="50" aria-label="ズーム">
    <button class="plain me-3" aria-label="拡大"><svg width="7" height="7"><path stroke-width="1.200" d="M0 3.500h7M3.500 0v7"/></svg></button>
    <span>100%</span>
  </footer>
</div>
<script>
const letters = 'ABCDEFGHIJKLMNOPQRSTUVWXY'.split('');
const widths = [75, 93, 93, 93, 93];
const heights = {1: 32, 2: 31, 3: 41, 4: 41, 5: 40, 6: 40, 7: 40};
const data = {
  1: ['売上実績（秋葉原店）'],
  2: ['', '9月', '10月', '11月', '12月'],
  3: ['製品A', '182,600', '214,500', '143,000', '211,200'],
  4: ['製品B', '206,700', '249,630', '248,040', '221,010'],
  5: ['製品C', '264,500', '326,600', '322,000', '365,700'],
  6: ['製品D', '117,500', '122,600', '195,000', '212,700'],
  7: ['製品E', '365,500', '437,600', '425,000', '425,000']
};
document.getElementById('cols').innerHTML = '<col style="width:34px">' +
  letters.map((_, i) => `<col style="width:${widths[i] || 72}px">`).join('');
document.getElementById('heads').innerHTML = '<th class="corner"></th>' +
  letters.map((l, i) => `<th scope="col"${i ? '' : ' class="sel"'}>${l}</th>`).join('');
let html = '';
for (let r = 1; r <= 28; r++) {
  html += `<tr style="height:${heights[r] || 25}px"><th scope="row"${r === 1 ? ' class="sel"' : ''}>${r}</th>`;
  letters.forEach((_, c) => {
    const v = (data[r] || [])[c];
    let cls = '';
    if (r === 1 && c === 0) cls = 'ttl';
    else if (r === 2 && c < 5) cls = c ? 'hd' : 'hd lab';
    else if (r > 2 && r < 8 && c < 5) cls = c ? 'num' : 'lab';
    html += `<td${cls ? ` class="${cls}"` : ''}>${v || ''}</td>`;
  });
  html += '</tr>';
}
document.getElementById('grid').innerHTML = html;
</script>
</body>
</html>
